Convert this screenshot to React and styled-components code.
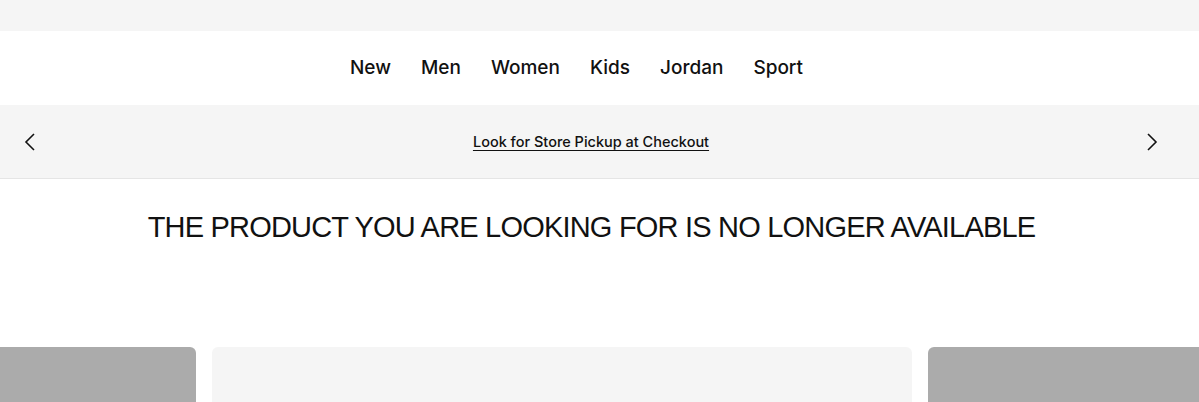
import React from 'react';
import styled, { createGlobalStyle } from 'styled-components';

const GlobalStyle = createGlobalStyle`
  html, body {
    margin: 0;
    padding: 0;
    background: #fff;
    overflow: hidden;
  }
  body {
    font-family: "Liberation Sans", Arial, sans-serif;
    color: #111;
  }
`;

const Page = styled.div`
  width: 1199px;
  height: 402px;
  overflow: hidden;
`;

const UtilityBar = styled.div`
  height: 31px;
  background: #f5f5f5;
`;

const Nav = styled.nav`
  height: 74px;
  display: flex;
  align-items: center;
  justify-content: center;
  padding-right: 46px;
  gap: 30px;
`;

const NavLink = styled.a`
  font-family: Inter, "Liberation Sans", sans-serif;
  font-size: 19px;
  font-weight: 500;
  color: #111;
  text-decoration: none;
  margin-top: -1px;
`;

const PromoBar = styled.div`
  height: 74px;
  box-sizing: border-box;
  background: #f5f5f5;
  border-bottom: 1px solid #e5e5e5;
  display: flex;
  align-items: center;
  justify-content: space-between;
  padding: 0 38px 0 21px;
`;

const Arrow = styled.button`
  border: 0;
  background: none;
  padding: 0;
  width: 18px;
  height: 24px;
  display: flex;
  align-items: center;
  justify-content: center;
  color: #111;
`;

const PromoLink = styled.a`
  font-family: Inter, "Liberation Sans", sans-serif;
  font-size: 14.5px;
  font-weight: 500;
  color: #111;
  text-decoration: underline;
  text-underline-offset: 3px;
  text-decoration-thickness: 1px;
`;

const Heading = styled.h1`
  margin: 0;
  width: 1183px;
  text-align: center;
  padding-top: 30px;
  font-size: 29px;
  font-weight: 400;
  letter-spacing: -0.8px;
  line-height: 36px;
  color: #111;
`;

const Track = styled.div`
  display: flex;
  gap: 16px;
  margin-top: 102px;
  margin-left: -504px;
`;

const Card = styled.div`
  flex: 0 0 700px;
  height: 60px;
  border-radius: 6px;
  background: ${p => (p.$active ? '#f5f5f5' : '#ababab')};
`;

const Chevron = ({ dir }) => (
  <svg width="18" height="24" viewBox="0 0 18 24" fill="none" stroke="currentColor" strokeWidth="1.6">
    {dir === 'left' ? <path d="M13 4l-8 8 8 8" /> : <path d="M5 4l8 8-8 8" />}
  </svg>
);

const App = () => {
  const links = ['New', 'Men', 'Women', 'Kids', 'Jordan', 'Sport'];
  return (
    <Page>
      <GlobalStyle />
      <UtilityBar />
      <Nav>
        {links.map(l => (
          <NavLink key={l}>{l}</NavLink>
        ))}
      </Nav>
      <PromoBar>
        <Arrow aria-label="Previous">
          <Chevron dir="left" />
        </Arrow>
        <PromoLink>Look for Store Pickup at Checkout</PromoLink>
        <Arrow aria-label="Next">
          <Chevron dir="right" />
        </Arrow>
      </PromoBar>
      <Heading>THE PRODUCT YOU ARE LOOKING FOR IS NO LONGER AVAILABLE</Heading>
      <Track>
        <Card />
        <Card $active />
        <Card />
      </Track>
    </Page>
  );
};

export default App;
